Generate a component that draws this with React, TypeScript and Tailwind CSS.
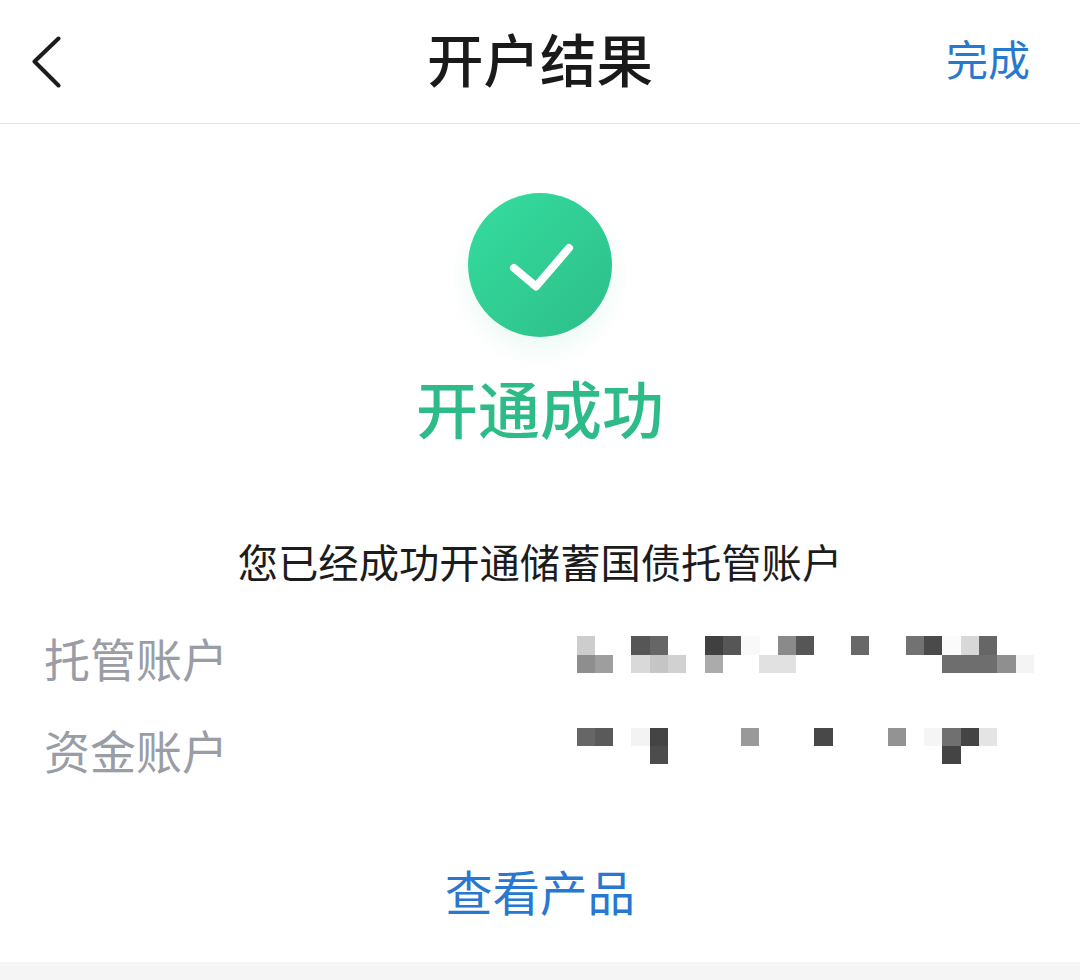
const FONT = "font-['Noto_Sans_CJK_SC','Noto_Sans',sans-serif]";

type Cell = [number, number, number, string];

// x, y, width, fill: blurred mosaic cells of the masked account numbers
const ROW_ONE: Cell[] = [
  [0, 0, 18, "#cdcdcd"],
  [54, 0, 19, "#565656"],
  [73, 0, 18, "#666666"],
  [128, 0, 18, "#404040"],
  [146, 0, 18, "#565656"],
  [164, 0, 19, "#f9f9f9"],
  [201, 0, 18, "#8a8a8a"],
  [219, 0, 18, "#565656"],
  [274, 0, 18, "#686868"],
  [329, 0, 18, "#727272"],
  [347, 0, 18, "#4a4a4a"],
  [365, 0, 19, "#fbfbfb"],
  [384, 0, 18, "#d8d8d8"],
  [402, 0, 18, "#666666"],
  [0, 19, 18, "#8e8e8e"],
  [18, 19, 18, "#9e9e9e"],
  [54, 19, 19, "#d9d9d9"],
  [73, 19, 18, "#c5c5c5"],
  [91, 19, 18, "#d1d1d1"],
  [128, 19, 18, "#ababab"],
  [182, 19, 37, "#e1e1e1"],
  [365, 19, 55, "#6e6e6e"],
  [420, 19, 19, "#8f8f8f"],
  [439, 19, 18, "#f4f4f4"],
];

const ROW_TWO: Cell[] = [
  [0, 0, 18, "#666666"],
  [18, 0, 18, "#5a5a5a"],
  [54, 0, 19, "#f3f3f3"],
  [73, 0, 18, "#444444"],
  [164, 0, 18, "#999999"],
  [237, 0, 19, "#484848"],
  [311, 0, 18, "#939393"],
  [347, 0, 18, "#f5f5f5"],
  [365, 0, 19, "#707070"],
  [384, 0, 18, "#444444"],
  [402, 0, 18, "#e4e4e4"],
  [73, 18, 18, "#4c4c4c"],
  [365, 18, 19, "#444444"],
];

function Mosaic({ cells, height, className }: { cells: Cell[]; height: number; className: string }) {
  return (
    <svg width="457" height={height} viewBox={`0 0 457 ${height}`} className={`block ${className}`}>
      {cells.map(([x, y, w, fill]) => (
        <rect key={`${x}-${y}`} x={x} y={y} width={w} height={y === 0 && height > 36 ? 19 : 18} fill={fill} />
      ))}
    </svg>
  );
}

function SuccessIcon() {
  return (
    <div className="flex h-[144px] w-[144px] items-center justify-center rounded-full bg-gradient-to-br from-[#35dd9f] to-[#2dbe89] shadow-[0_12px_24px_rgba(46,200,145,0.10)]">
      <svg width="144" height="144" viewBox="0 0 144 144" fill="none">
        <path
          d="M46 75 L68 93.5 L101 55"
          stroke="#ffffff"
          strokeWidth="8"
          strokeLinecap="round"
          strokeLinejoin="round"
        />
      </svg>
    </div>
  );
}

export default function App() {
  return (
    <div className={`flex h-[980px] w-[1080px] flex-col overflow-hidden bg-white ${FONT}`}>
      <header className="flex h-[124px] shrink-0 items-center border-b border-[#e3e3e3] pl-[32px] pr-[50px]">
        <div className="flex-1">
          <svg width="30" height="52" viewBox="0 0 30 52" fill="none" className="mt-[1px] block">
            <path
              d="M26.5 2.5 L2.5 25.5 L26.5 49.5"
              stroke="#1c1c1c"
              strokeWidth="4"
              strokeLinecap="round"
              strokeLinejoin="round"
            />
          </svg>
        </div>
        <h1 className="mb-[8px] ml-[18px] text-[56.5px] font-medium leading-none text-[#1a1a1a]">开户结果</h1>
        <div className="mb-[8px] flex flex-1 justify-end">
          <span className="text-[42px] leading-none text-[#2878d0]">完成</span>
        </div>
      </header>

      <main className="flex flex-1 flex-col items-center pt-[69px]">
        <SuccessIcon />
        <p className="mt-[39px] text-[62px] font-medium leading-none text-[#2dbb88]">开通成功</p>
        <p className="mt-[103px] text-[40.3px] leading-none text-[#1c1c1c]">您已经成功开通储蓄国债托管账户</p>

        <div className="mt-[48px] flex w-full flex-col gap-[36px] pl-[44px] pr-[46px]">
          <div className="flex h-[56px] items-center justify-between">
            <span className="text-[46px] leading-none text-[#9a9da5]">托管账户</span>
            <Mosaic cells={ROW_ONE} height={37} className="mb-[5px]" />
          </div>
          <div className="flex h-[56px] items-center justify-between">
            <span className="text-[46px] leading-none text-[#9a9da5]">资金账户</span>
            <Mosaic cells={ROW_TWO} height={36} className="mb-[7px]" />
          </div>
        </div>

        <p className="mt-[90px] text-[47.5px] leading-none text-[#2878d0]">查看产品</p>
      </main>

      <div className="h-[18px] shrink-0 bg-[#f5f5f5]" />
    </div>
  );
}
